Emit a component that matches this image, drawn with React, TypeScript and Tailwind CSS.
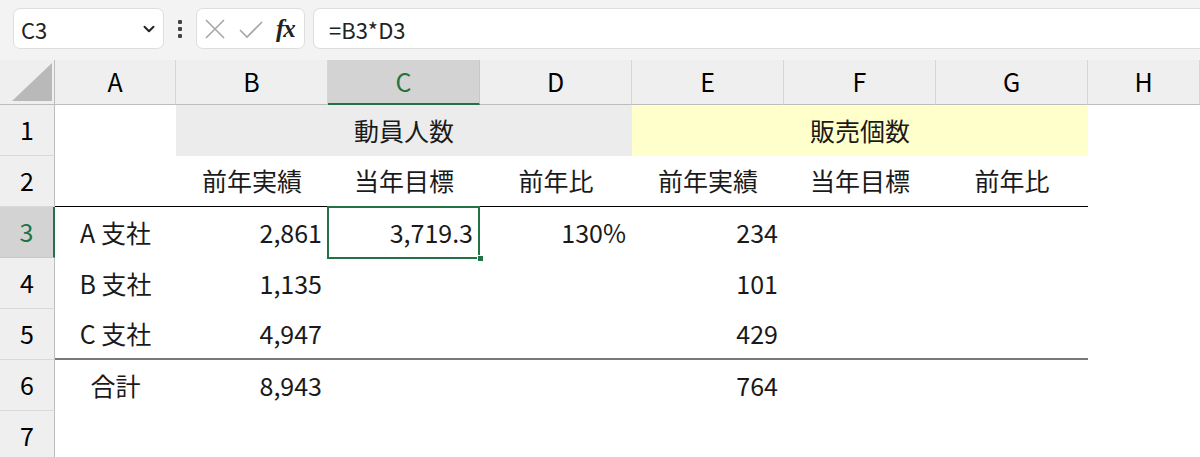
import React from "react";
import { ChevronDown } from "lucide-react";

const COLS = ["A", "B", "C", "D", "E", "F", "G", "H"];

type Cell = { text?: string; align?: "left" | "center" | "right" };

const rows: Cell[][] = [
  [],
  [
    {},
    { text: "前年実績", align: "center" },
    { text: "当年目標", align: "center" },
    { text: "前年比", align: "center" },
    { text: "前年実績", align: "center" },
    { text: "当年目標", align: "center" },
    { text: "前年比", align: "center" },
    {},
  ],
  [
    { text: "A 支社", align: "center" },
    { text: "2,861", align: "right" },
    { text: "3,719.3", align: "right" },
    { text: "130%", align: "right" },
    { text: "234", align: "right" },
    {},
    {},
    {},
  ],
  [
    { text: "B 支社", align: "center" },
    { text: "1,135", align: "right" },
    {},
    {},
    { text: "101", align: "right" },
    {},
    {},
    {},
  ],
  [
    { text: "C 支社", align: "center" },
    { text: "4,947", align: "right" },
    {},
    {},
    { text: "429", align: "right" },
    {},
    {},
    {},
  ],
  [
    { text: "合計", align: "center" },
    { text: "8,943", align: "right" },
    {},
    {},
    { text: "764", align: "right" },
    {},
    {},
    {},
  ],
  [{}, {}, {}, {}, {}, {}, {}, {}],
];

function alignClass(a?: string) {
  if (a === "right") return "justify-end pr-[6px]";
  if (a === "left") return "justify-start pl-[6px]";
  return "justify-center";
}

export default function App() {
  return (
    <div className="w-[1200px] h-[457px] overflow-hidden bg-white text-[#1a1a1a] font-['Noto_Sans_CJK_JP','Noto_Sans',sans-serif]">
      {/* formula bar */}
      <div className="h-[60px] bg-[#f3f3f3] flex items-start pt-[8px] pl-[13px]">
        <div className="w-[151px] h-[41px] bg-white border border-[#dedede] rounded-[7px] flex items-center justify-between pl-[7px] pr-[5px]">
          <span className="text-[22px] leading-none text-[#222]">C3</span>
          <ChevronDown size={18} strokeWidth={2.6} className="text-[#222]" />
        </div>
        <div className="w-[32px] h-[41px] flex flex-col items-center justify-center gap-[3px]">
          <span className="w-[4px] h-[4px] bg-[#444] rounded-[1px]" />
          <span className="w-[4px] h-[4px] bg-[#444] rounded-[1px]" />
          <span className="w-[4px] h-[4px] bg-[#444] rounded-[1px]" />
        </div>
        <div className="w-[109px] h-[41px] bg-white border border-[#dedede] rounded-[7px] flex items-center pl-[7px]">
          <svg width="22" height="22" viewBox="0 0 22 22" className="mr-[12px]">
            <path d="M2 2 L20 20 M20 2 L2 20" stroke="#a6a6a6" strokeWidth="1.6" fill="none" />
          </svg>
          <svg width="26" height="20" viewBox="0 0 26 20" className="mr-[12px]">
            <path d="M2 11 L9 18 L24 3" stroke="#a6a6a6" strokeWidth="1.6" fill="none" />
          </svg>
          <span className="text-[25px] leading-none italic font-bold text-[#222] font-['Liberation_Serif',serif] tracking-[-1px]">fx</span>
        </div>
        <div className="flex-1 h-[41px] ml-[8px] bg-white border border-[#dedede] border-r-0 rounded-l-[7px] flex items-center pl-[15px]">
          <span className="text-[22px] leading-none text-[#222]">=B3*D3</span>
        </div>
      </div>

      {/* grid */}
      <div className="grid grid-cols-[55px_121px_152px_152px_152px_152px_152px_152px_1fr] grid-rows-[45px_51px_51px_51px_51px_51px_51px_51px]">
        {/* corner */}
        <div className="bg-[#efefef] border-r border-b border-[#bdbdbd] flex items-end justify-end pr-[2px] pb-[3px]">
          <svg width="40" height="38" viewBox="0 0 40 38">
            <polygon points="40,0 40,38 0,38" fill="#b9b9b9" />
          </svg>
        </div>
        {COLS.map((c) => {
          const sel = c === "C";
          return (
            <div
              key={c}
              className={
                sel
                  ? "bg-[#d3d3d3] border-r border-[#c8c8c8] border-b-2 border-b-[#217346] flex items-center justify-center text-[25px] text-[#217346]"
                  : "bg-[#efefef] border-r border-[#d6d6d6] border-b border-b-[#bdbdbd] flex items-center justify-center text-[25px] text-black"
              }
            >
              {c}
            </div>
          );
        })}

        {rows.map((row, ri) => {
          const rn = ri + 1;
          const selRow = rn === 3;
          const header = (
            <div
              key={`h${rn}`}
              className={
                selRow
                  ? "bg-[#d3d3d3] border-r-2 border-r-[#217346] border-b border-b-[#c8c8c8] flex items-center justify-center text-[25px] text-[#217346]"
                  : "bg-[#efefef] border-r border-r-[#bdbdbd] border-b border-b-[#d9d9d9] flex items-center justify-center text-[25px] text-black"
              }
            >
              {rn}
            </div>
          );
          if (rn === 1) {
            return (
              <React.Fragment key="r1">
                {header}
                <div className="bg-white" />
                <div className="col-span-3 bg-[#ececec] flex items-center justify-center text-[25px]">
                  動員人数
                </div>
                <div className="col-span-3 bg-[#ffffcc] flex items-center justify-center text-[25px]">
                  販売個数
                </div>
                <div className="bg-white" />
              </React.Fragment>
            );
          }
          return (
            <React.Fragment key={`r${rn}`}>
              {header}
              {row.map((cell, ci) => {
                let border = "";
                if (ci < 7 && rn === 2) border = "border-b border-b-black";
                if (ci < 7 && rn === 5) border = "border-b-2 border-b-[#787878]";
                const isSel = rn === 3 && ci === 2;
                return (
                  <div
                    key={ci}
                    className={`relative flex items-center text-[25px] whitespace-nowrap ${border} ${alignClass(cell.align)} ${isSel ? "pr-[7px]" : ""}`}
                  >
                    {cell.text}
                    {isSel && (
                      <>
                        <div className="absolute -left-[1px] -top-[1px] right-0 bottom-[-1px] border-2 border-[#217346] pointer-events-none" />
                        <div className="absolute right-[-4px] bottom-[-4px] w-[7px] h-[7px] bg-[#217346] border border-white" />
                      </>
                    )}
                  </div>
                );
              })}
            </React.Fragment>
          );
        })}
      </div>
    </div>
  );
}
